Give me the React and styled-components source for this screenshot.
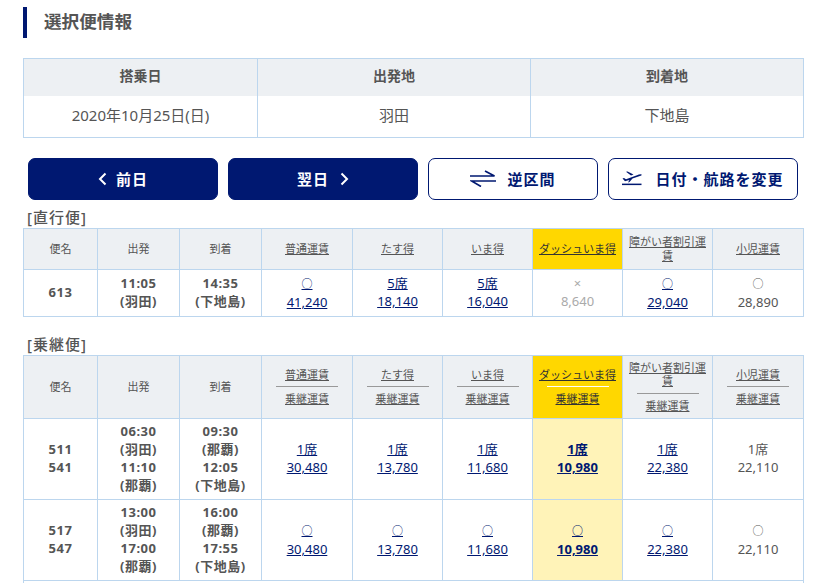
import React from "react";
import styled, { createGlobalStyle } from "styled-components";

const Global = createGlobalStyle`
  html, body { margin: 0; padding: 0; background: #fff; height: 583px; overflow: hidden; }
  body { font-family: "Noto Sans", "Noto Sans CJK JP", sans-serif; color: #4d4d4d; }
  * { box-sizing: border-box; }
`;

const Page = styled.div`
  width: 832px;
  height: 583px;
  overflow: hidden;
  padding: 7px 30px 0 23px;
`;

const Title = styled.h2`
  margin: 0;
  height: 31px;
  border-left: 4px solid #001871;
  padding-left: 17px;
  font-size: 17.6px;
  font-weight: 700;
  line-height: 29px;
  color: #555;
`;

const InfoTable = styled.table`
  margin-top: 20px;
  width: 780px;
  table-layout: fixed;
  border-collapse: collapse;
  font-size: 15px;
`;

const InfoHead = styled.th`
  height: 37px;
  padding: 0 0 4px;
  background: #edf0f3;
  border: 1px solid #bcd6ee;
  border-bottom: 0;
  font-weight: 700;
  font-size: 14px;
  color: #555;
`;

const InfoCell = styled.td`
  height: 42px;
  padding: 0 0 4px;
  border: 1px solid #bcd6ee;
  border-top: 0;
  text-align: center;
  color: #555;
`;

const Buttons = styled.div`
  display: flex;
  gap: 10px;
  margin: 20px 0 0 5px;
`;

const NavButton = styled.button`
  width: ${(p) => p.$w}px;
  height: 42px;
  border-radius: 7px;
  border: 1px solid #001871;
  background: ${(p) => (p.$outline ? "#fff" : "#001871")};
  color: ${(p) => (p.$outline ? "#001871" : "#fff")};
  font: 700 15px "Noto Sans", "Noto Sans CJK JP", sans-serif;
  letter-spacing: 1px;
  display: flex;
  align-items: center;
  justify-content: center;
  gap: ${(p) => p.$gap}px;
  padding: 0 0 1px;
`;

const SectionLabel = styled.div`
  font-size: 15px;
  font-weight: 500;
  line-height: 16px;
  letter-spacing: 1px;
  color: #555;
  padding-left: 4px;
  height: 19px;
  margin-top: ${(p) => p.$top}px;
`;

const FareTable = styled.table`
  width: 780px;
  table-layout: fixed;
  border-collapse: collapse;
  font-size: 13px;
  line-height: 18px;
`;

const Head = styled.th`
  padding: 0 2px 1px;
  height: ${(p) => p.$h}px;
  border: 1px solid #bcd6ee;
  background: ${(p) => (p.$dash ? "#ffd700" : "#edf0f3")};
  font-size: 11px;
  line-height: 13.5px;
  font-weight: 400;
  color: #555;
  text-align: center;
`;

const Fare = styled.span`
  display: block;
  text-decoration: underline;
  color: ${(p) => (p.$dash ? "#333" : "#555")};
`;

const Rule = styled.hr`
  margin: 5px auto 5px;
  width: 62px;
  height: 1px;
  border: 0;
  background: ${(p) => (p.$dash ? "#fff" : "#999")};
`;

const Cell = styled.td`
  padding: 0 0 2px;
  height: ${(p) => p.$h}px;
  border: 1px solid #bcd6ee;
  text-align: center;
  background: ${(p) => (p.$dash ? "#fff3b8" : "#fff")};
  font-weight: ${(p) => (p.$bold ? 700 : 400)};
  letter-spacing: ${(p) => (p.$wide ? "0.5px" : "0")};
  color: ${(p) => (p.$muted ? "#aaa" : "#555")};
`;

const FareLink = styled.a`
  display: block;
  color: #001871;
  text-decoration: underline;
`;

const Mark = styled.span`
  font-size: 11px;
`;

const Tail = styled.td`
  height: 40px;
  padding: 0;
  border: 1px solid #bcd6ee;
`;

const Chevron = ({ left }) => (
  <svg width="9" height="14" viewBox="0 0 9 14" fill="none" stroke="#fff" strokeWidth="2">
    <path d={left ? "M7.5 1.5 2 7l5.5 5.5" : "M1.5 1.5 7 7l-5.5 5.5"} />
  </svg>
);

const SwapIcon = () => (
  <svg width="26" height="17" viewBox="0 0 26 17" fill="none" stroke="#001871" strokeWidth="1.7">
    <path d="M0 6h24.5L15 1" />
    <path d="M26 11H1.5L11 16.5" />
  </svg>
);

const PlaneIcon = () => (
  <svg width="20" height="15" viewBox="0 0 20 15" fill="#001871">
    <path d="M0.5 7.5 2 7l2 1.2L15 4.2c1.5-.6 3.5-1.2 4.6-.8l-.2 1L10.5 7.6 7.5 11 6 11.4 7.4 8.9 3 10.2z" />
    <path d="M4 .8 5.6.4 11.5 3.6 9 4.5z" />
    <rect x="0" y="12.6" width="19.5" height="1.5" />
  </svg>
);

const fareNames = ["普通運賃", "たす得", "いま得", "ダッシュいま得", "障がい者割引運賃", "小児運賃"];

const FareHeads = ({ h, sub }) =>
  fareNames.map((n, i) => (
    <Head key={n} $h={h} $dash={i === 3}>
      <Fare $dash={i === 3}>{n}</Fare>
      {sub && <Rule $dash={i === 3} />}
      {sub && <Fare $dash={i === 3}>乗継運賃</Fare>}
    </Head>
  ));

const Cols = () => (
  <colgroup>
    {[74, 82, 82, 91, 90, 90, 90, 90, 91].map((w, i) => (
      <col key={i} style={{ width: w }} />
    ))}
  </colgroup>
);

const FixedHeads = ({ h }) =>
  ["便名", "出発", "到着"].map((n) => (
    <Head key={n} $h={h}>{n}</Head>
  ));

const FareCells = ({ h, seats, prices }) =>
  prices.map((p, i) => {
    const isDash = i === 3;
    if (i === 5)
      return (
        <Cell key={i} $h={h}>
          {seats[i]}
          <br />
          {p}
        </Cell>
      );
    return (
      <Cell key={i} $h={h} $dash={isDash} $bold={isDash}>
        <FareLink>{seats[i]}</FareLink>
        <FareLink>{p}</FareLink>
      </Cell>
    );
  });

const Lines = ({ items }) => items.map((t, i) => <div key={i}>{t}</div>);

const O = <Mark>○</Mark>;

export default function App() {
  return (
    <Page>
      <Global />
      <Title>選択便情報</Title>
      <InfoTable>
        <colgroup>
          <col style={{ width: 234 }} />
          <col style={{ width: 273 }} />
          <col style={{ width: 273 }} />
        </colgroup>
        <thead>
          <tr>
            <InfoHead>搭乗日</InfoHead>
            <InfoHead>出発地</InfoHead>
            <InfoHead>到着地</InfoHead>
          </tr>
        </thead>
        <tbody>
          <tr>
            <InfoCell>2020年10月25日(日)</InfoCell>
            <InfoCell>羽田</InfoCell>
            <InfoCell>下地島</InfoCell>
          </tr>
        </tbody>
      </InfoTable>
      <Buttons>
        <NavButton $w={190} $gap={9}><Chevron left />前日</NavButton>
        <NavButton $w={190} $gap={11}>翌日<Chevron /></NavButton>
        <NavButton $w={170} $gap={11} $outline><SwapIcon />逆区間</NavButton>
        <NavButton $w={190} $gap={13} $outline><PlaneIcon />日付・航路を変更</NavButton>
      </Buttons>
      <SectionLabel $top={9}>[直行便]</SectionLabel>
      <FareTable>
        <Cols />
        <thead>
          <tr>
            <FixedHeads h={41} />
            <FareHeads h={41} />
          </tr>
        </thead>
        <tbody>
          <tr>
            <Cell $h={47} $bold $wide>613</Cell>
            <Cell $h={47} $bold $wide><Lines items={["11:05", "(羽田)"]} /></Cell>
            <Cell $h={47} $bold $wide><Lines items={["14:35", "(下地島)"]} /></Cell>
            <Cell $h={47}><FareLink>{O}</FareLink><FareLink>41,240</FareLink></Cell>
            <Cell $h={47}><FareLink>5席</FareLink><FareLink>18,140</FareLink></Cell>
            <Cell $h={47}><FareLink>5席</FareLink><FareLink>16,040</FareLink></Cell>
            <Cell $h={47} $muted>×<br />8,640</Cell>
            <Cell $h={47}><FareLink>{O}</FareLink><FareLink>29,040</FareLink></Cell>
            <Cell $h={47}>{O}<br />28,890</Cell>
          </tr>
        </tbody>
      </FareTable>
      <SectionLabel $top={19}>[乗継便]</SectionLabel>
      <FareTable>
        <Cols />
        <thead>
          <tr>
            <FixedHeads h={63} />
            <FareHeads h={63} sub />
          </tr>
        </thead>
        <tbody>
          <tr>
            <Cell $h={81} $bold $wide><Lines items={["511", "541"]} /></Cell>
            <Cell $h={81} $bold $wide><Lines items={["06:30", "(羽田)", "11:10", "(那覇)"]} /></Cell>
            <Cell $h={81} $bold $wide><Lines items={["09:30", "(那覇)", "12:05", "(下地島)"]} /></Cell>
            <FareCells h={81} seats={["1席", "1席", "1席", "1席", "1席", "1席"]} prices={["30,480", "13,780", "11,680", "10,980", "22,380", "22,110"]} />
          </tr>
          <tr>
            <Cell $h={81} $bold $wide><Lines items={["517", "547"]} /></Cell>
            <Cell $h={81} $bold $wide><Lines items={["13:00", "(羽田)", "17:00", "(那覇)"]} /></Cell>
            <Cell $h={81} $bold $wide><Lines items={["16:00", "(那覇)", "17:55", "(下地島)"]} /></Cell>
            <FareCells h={81} seats={[O, O, O, O, O, O]} prices={["30,480", "13,780", "11,680", "10,980", "22,380", "22,110"]} />
          </tr>
          <tr>
            <Tail colSpan={9} />
          </tr>
        </tbody>
      </FareTable>
    </Page>
  );
}
